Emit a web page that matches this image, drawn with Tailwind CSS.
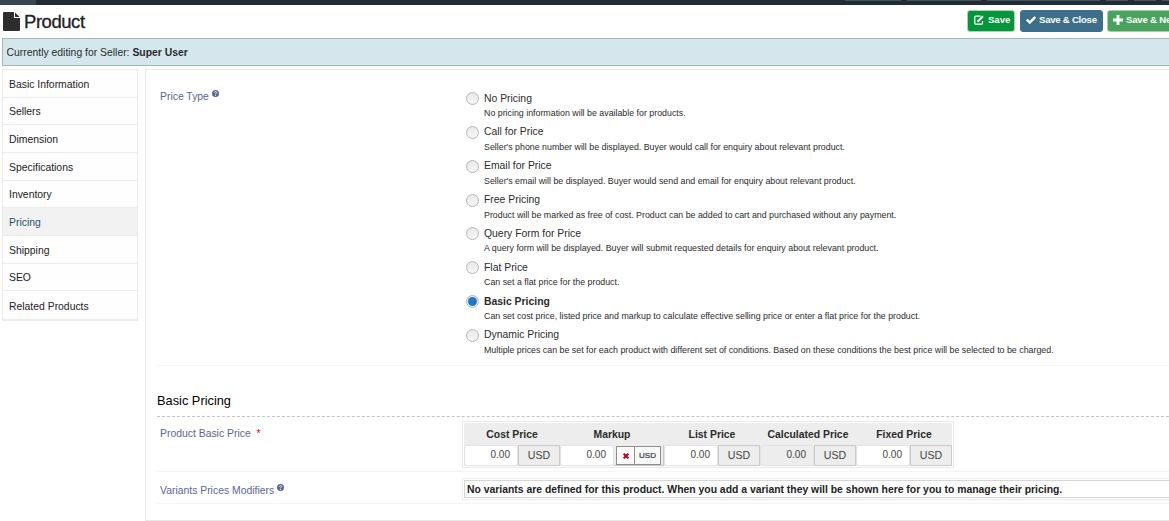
<!DOCTYPE html>
<html lang="en">
<head>
<meta charset="utf-8">
<title>Product</title>
<script src="https://cdn.jsdelivr.net/npm/@tailwindcss/browser@4"></script>
</head>
<body class="w-[1169px] h-[521px] overflow-hidden bg-white font-['Liberation_Sans',Arial,sans-serif] text-[10.4px] leading-[14px] text-[#2b2b2b]">
<div class="h-[5px] flex bg-[#222c33]">
  <div class="w-[36px] bg-[#36474f]"></div>
  <div class="ml-auto flex h-px gap-[6px]">
    <i class="w-[56px] bg-[#3d5661]"></i><i class="w-[74px] bg-[#3d5661]"></i><i class="w-[113px] bg-[#3d5661]"></i><i class="w-[22px] bg-[#3d5661]"></i><i class="w-[22px] bg-[#3d5661]"></i><i class="w-[7px] bg-[#3d5661]"></i>
  </div>
</div>
<header class="h-[33px] flex items-start pl-[3px] overflow-hidden">
  <svg class="mt-[7px] w-[17px] h-[19px] shrink-0" viewBox="0 0 17 19" fill="#2d2d2d"><path d="M1 0h10v6h6v12a1 1 0 0 1-1 1H1a1 1 0 0 1-1-1V1a1 1 0 0 1 1-1zM12 .4 16.600 5H12z"/></svg>
  <h1 class="ml-[4px] mt-[6px] text-[18.5px] leading-[22px] tracking-[-0.45px] text-[#222] [-webkit-text-stroke:0.3px_#222]">Product</h1>
  <div class="ml-auto mr-[-30px] mt-[5px] flex gap-[4px] text-[9.6px] tracking-[-0.05px] font-bold text-white whitespace-nowrap">
    <button class="w-[48px] h-[22px] rounded-[3px] border border-[#a9d3b6] bg-[#06953a] flex items-center pl-[6px] pb-[2px]">
      <svg class="w-[10px] h-[10px] mr-[4px]" viewBox="0 0 10 10" fill="none" stroke="#fff"><path stroke-width="1.200" d="M6.500 1.200H1.800a1 1 0 0 0-1 1v6a1 1 0 0 0 1 1h5.700a1 1 0 0 0 1-1V6"/><path stroke-width="2" d="M3.500 6.700 9 1.200"/></svg>Save</button>
    <button class="ml-[1px] w-[83px] h-[22px] rounded-[3px] border border-[#3d6f8b] bg-[#3d6f8b] flex items-center pl-[5px] pb-[2px] tracking-[-0.25px]">
      <svg class="w-[10px] h-[8px] mr-[3px]" viewBox="0 0 10 8" fill="none" stroke="#fff" stroke-width="2.400"><path d="M.8 3.700 3.800 6.500 9.200 1"/></svg>Save &amp; Close</button>
    <button class="w-[92px] h-[22px] rounded-[3px] border border-[#a9cdb0] bg-[#49a35d] flex items-center pl-[5px] pb-[2px] tracking-[-0.2px]">
      <svg class="w-[10px] h-[10px] mr-[3px]" viewBox="0 0 10 10" stroke="#fff" stroke-width="2.800"><path d="M5 0v10M0 5h10"/></svg>Save &amp; New</button>
  </div>
</header>
<div class="ml-[2px] h-[28px] border border-r-0 border-[#a3b6bc] bg-[#d5e7ed] pl-[3.500px] pt-[7px]">Currently editing for Seller: <b>Super User</b></div>
<div class="flex pl-[2px] pt-[3px]">
  <nav class="w-[136px] h-[252px] shrink-0 border border-b-2 border-[#ebebeb] grid grid-rows-9 divide-y divide-[#ebebeb] bg-[#fefefe] text-[#222]">
    <a class="flex items-center pl-[6px] pt-[3px]">Basic Information</a>
    <a class="flex items-center pl-[6px] pt-[3px]">Sellers</a>
    <a class="flex items-center pl-[6px] pt-[3px]">Dimension</a>
    <a class="flex items-center pl-[6px] pt-[3px]">Specifications</a>
    <a class="flex items-center pl-[6px] pt-[3px]">Inventory</a>
    <a class="flex items-center pl-[6px] pt-[3px] bg-[#f2f2f2] text-[#1d5468]">Pricing</a>
    <a class="flex items-center pl-[6px] pt-[3px]">Shipping</a>
    <a class="flex items-center pl-[6px] pt-[3px]">SEO</a>
    <a class="flex items-center pl-[6px] pt-[3px]">Related Products</a>
  </nav>
  <main class="ml-[7px] grow h-[452px] min-w-0 border border-r-0 border-[#e8e8e8] pl-[11px]">
    <section class="h-[296px] flex border-b border-[#f5f5f5] pl-[3px]">
      <div class="w-[306px] pt-[20px] flex text-[#5b6594]"><span>Price Type</span>
        <svg class="ml-[3px] w-[7px] h-[7px]" viewBox="0 0 14 14"><circle cx="7" cy="7" r="7" fill="#5b6594"/><path d="M4.800 5.200c.2-2.800 4.600-2.600 4.500 0C9.200 6.700 7 6.700 7 8.500M7 9.700v2" fill="none" stroke="#fff" stroke-width="1.800"/></svg></div>
      <div class="pt-[20px]">
        <script>
        const types = [
          ["No Pricing", "No pricing information will be available for products."],
          ["Call for Price", "Seller's phone number will be displayed. Buyer would call for enquiry about relevant product."],
          ["Email for Price", "Seller's email will be displayed. Buyer would send and email for enquiry about relevant product."],
          ["Free Pricing", "Product will be marked as free of cost. Product can be added to cart and purchased without any payment."],
          ["Query Form for Price", "A query form will be displayed. Buyer will submit requested details for enquiry about relevant product."],
          ["Flat Price", "Can set a flat price for the product."],
          ["Basic Pricing", "Can set cost price, listed price and markup to calculate effective selling price or enter a flat price for the product."],
          ["Dynamic Pricing", "Multiple prices can be set for each product with different set of conditions. Based on these conditions the best price will be selected to be charged."]
        ];
        document.write(types.map(([name, note], i) => `
          <label class="h-[33.85px] flex items-start whitespace-nowrap">
            <span class="mt-[2px] mr-[5px] w-[13px] h-[13px] rounded-full border border-[#b5b5b5] bg-linear-to-b from-[#e9e9e9] to-[#f6f6f6] flex items-center justify-center">${i === 6 ? '<i class="w-[9px] h-[9px] rounded-full bg-[#2079c7]"></i>' : ''}</span>
            <span class="flex flex-col pt-[1.500px]"><span class="${i === 6 ? 'font-bold' : ''}">${name}</span><span class="mt-[1.500px] text-[8.84px] leading-[12px]">${note}</span></span>
          </label>`).join(''));
        </script>
      </div>
    </section>
    <h2 class="h-[51px] pt-[26px] text-[12.8px] leading-[18px] text-black border-b border-dashed border-[#c4c4c4]">Basic Pricing</h2>
    <section class="h-[55px] flex border-b border-[#f5f5f5] pl-[3px]">
      <div class="w-[302px] pt-[10px] text-[#5b6594]">Product Basic Price <span class="ml-[3px] text-[#e0001b]">*</span></div>
      <div class="mt-[4px] w-[492px] h-[47px] border border-[#e9e9e9] p-px">
        <div class="h-full bg-[#ededed] grid grid-cols-[96px_104px_96px_96px_96px]" id="prices"></div>
      </div>
    </section>
    <section class="h-[32px] flex border-b border-[#f5f5f5] pl-[3px]">
      <div class="w-[302px] shrink-0 pt-[12px] flex text-[#5b6594]"><span>Variants Prices Modifiers</span>
        <svg class="ml-[3px] w-[7px] h-[7px]" viewBox="0 0 14 14"><circle cx="7" cy="7" r="7" fill="#5b6594"/><path d="M4.800 5.200c.2-2.800 4.600-2.600 4.500 0C9.200 6.700 7 6.700 7 8.500M7 9.700v2" fill="none" stroke="#fff" stroke-width="1.800"/></svg></div>
      <div class="mt-[6px] grow h-[22px] border border-r-0 border-[#ededed] py-px pl-px"><div class="h-full border border-r-0 border-[#d6d6d6] pl-[2px] font-bold whitespace-nowrap leading-[17px] text-[#222]">No variants are defined for this product. When you add a variant they will be shown here for you to manage their pricing.</div></div>
    </section>
  </main>
</div>
<script>
document.getElementById('prices').innerHTML = ['Cost Price', 'Markup', 'List Price', 'Calculated Price', 'Fixed Price'].map(name => {
  const unit = name === 'Markup'
    ? '<div class="w-[50px] border-r border-b border-[#c9c9c9] pt-px pl-[2px]"><div class="w-[45px] h-[19px] border border-[#8e8e8e] bg-white flex"><div class="w-[18px] border-r border-[#8e8e8e] flex items-center justify-center"><svg class="w-[6px] h-[6px]" viewBox="0 0 6 6" stroke="#b8002c" stroke-width="2"><path d="M.6 .6 5.400 5.400M5.400 .6 .6 5.400"/></svg></div><div class="grow bg-[#f8f8f8] text-center text-[8px] leading-[18px] text-[#333] [-webkit-text-stroke:0.2px_#333]">USD</div></div></div>'
    : '<div class="w-[42px] border border-[#cacaca] text-center text-[10.6px] leading-[19px]">USD</div>';
  return `<div class="flex flex-col"><div class="h-[22px] text-center font-bold leading-[24px]">${name}</div><div class="h-[21px] flex text-[#444]"><div class="grow rounded-[3px] border border-[#e2e2e6] ${name === 'Calculated Price' ? 'bg-[#ededed]' : 'bg-white'} text-right pr-[7px] text-[10px] leading-[18px]">0.00</div>${unit}</div></div>`;
}).join('');
</script>
</body>
</html>
